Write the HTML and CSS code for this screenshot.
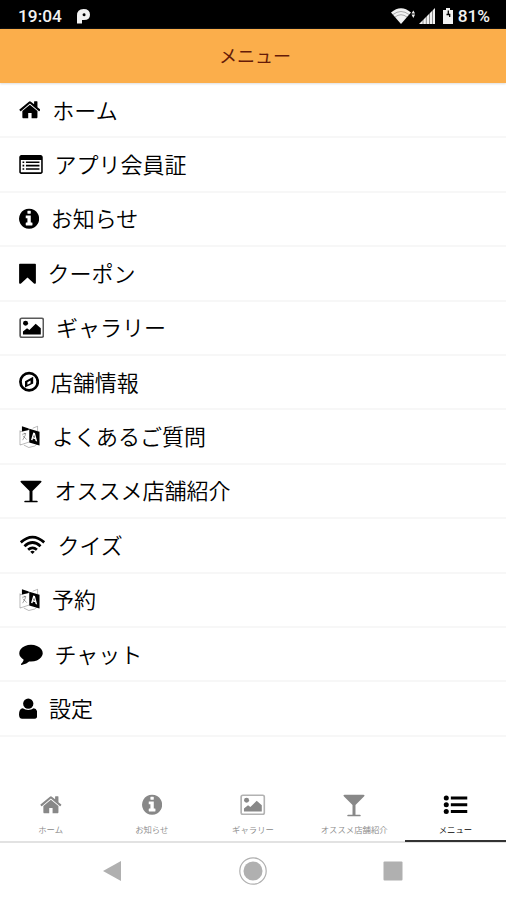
FILE: index.html
```html
<!DOCTYPE html>
<html lang="ja">
<head>
  <meta charset="UTF-8">
  <meta name="viewport" content="width=device-width, initial-scale=1.0">
  <title>メニュー</title>
  <link rel="stylesheet" href="styles.css">
</head>
<body>
  <!-- アイコン定義 -->
  <svg class="sprite" aria-hidden="true">
    <symbol id="home" viewBox="64 0 1664 1792">
      <path d="M1472 992v480q0 26-19 45t-45 19h-384v-384h-256v384h-384q-26 0-45-19t-19-45v-480q0-1 .5-3t.5-3l575-474 575 474q1 2 1 6zm223-69l-62 74q-8 9-21 11h-3q-13 0-21-7l-692-577-692 577q-12 8-24 7-13-2-21-11l-62-74q-8-10-7-23.500t11-21.500l719-599q32-26 76-26t76 26l244 204v-195q0-14 9-23t23-9h192q14 0 23 9t9 23v408l219 182q10 8 11 21.500t-7 23.500z"/>
    </symbol>
    <symbol id="card" viewBox="0 0 1792 1792">
      <path fill-rule="evenodd" d="M160 160h1472q66 0 113 47t47 113v1120q0 66-47 113t-113 47H160q-66 0-113-47T0 1440V320q0-66 47-113t113-47zM120 530v900q0 42 42 42h1468q42 0 42-42V530z"/>
      <path d="M250 640h130v120H250zM250 900h130v120H250zM250 1160h130v120H250zM510 640h1030v120H510zM510 900h1030v120H510zM510 1160h1030v120H510z"/>
    </symbol>
    <symbol id="info" viewBox="128 0 1536 1792">
      <path d="M1152 1376v-160q0-14-9-23t-23-9h-96v-512q0-14-9-23t-23-9h-320q-14 0-23 9t-9 23v160q0 14 9 23t23 9h96v320h-96q-14 0-23 9t-9 23v160q0 14 9 23t23 9h448q14 0 23-9t9-23zm-128-896v-160q0-14-9-23t-23-9h-192q-14 0-23 9t-9 23v160q0 14 9 23t23 9h192q14 0 23-9t9-23zm640 416q0 209-103 385.500t-279.500 279.500-385.500 103-385.500-103-279.500-279.500-103-385.500 103-385.500 279.500-279.500 385.500-103 385.500 103 279.500 279.500 103 385.500z"/>
    </symbol>
    <symbol id="bookmark" viewBox="0 0 1280 1792">
      <path d="M60 128h1160q60 0 60 60v1400q0 76-65 76-45 0-80-33l-495-450-495 450q-35 33-80 33-65 0-65-76V188q0-60 60-60z"/>
    </symbol>
    <symbol id="image" viewBox="0 0 1920 1792">
      <rect x="75" y="170" width="1770" height="1450" rx="130" fill="none" stroke="currentColor" stroke-width="130" opacity=".65"/>
      <circle cx="490" cy="560" r="190"/>
      <path d="M290 1420v-230l310-250 180 130 480-480 390 350v480z"/>
    </symbol>
    <symbol id="compass" viewBox="0 0 1536 1792">
      <circle cx="768" cy="896" r="660" fill="none" stroke="currentColor" stroke-width="210"/>
      <path fill-rule="evenodd" d="M1080 520v500l-624 310V850zM640 940v190l240-115V810z"/>
    </symbol>
    <symbol id="language" viewBox="0 0 22 24">
      <path fill="none" stroke="currentColor" stroke-width=".7" opacity=".4" d="M1 5.500v15l10-3.300M11 4.300L1 7M5 20.500l5 2.500 6-1.500 2.500-2M14 3.300l5-2v5"/>
      <path fill="none" stroke="currentColor" stroke-width=".8" opacity=".45" d="M3.300 9.500l4-1M5.500 8l1.200 2-3 5.500M4 11l4 4"/>
      <path d="M3 1.300l7 2.300v1.500L3 6.500z"/>
      <path fill-rule="evenodd" d="M10.500 3.800L21 7v14l-10.500-3zM14.600 7.700l-2.300 7.500 1.500.4.500-1.700 2.200.6.500 1.900 1.600.5-2.300-8.700zM15.400 10l.7 2.900-1.400-.4z"/>
    </symbol>
    <symbol id="glass" viewBox="0 0 1792 1792">
      <path d="M1699 186q0 35-43 78L1010 910v754h334q26 0 45 19t19 45-19 45-45 19H448q-26 0-45-19t-19-45 19-45 45-19h334V910L136 264q-43-43-43-78 0-58 90-58h1426q90 0 90 58z"/>
    </symbol>
    <symbol id="wifi" viewBox="0 0 2048 1792">
      <g fill="none" stroke="currentColor" stroke-width="210">
        <path d="M130 640q894-800 1788 0"/>
        <path d="M410 930q614-560 1228 0"/>
        <path d="M690 1200q334-290 668 0"/>
      </g>
      <path d="M1024 1270q90 0 170 75l-170 175-170-175q80-75 170-75z"/>
    </symbol>
    <symbol id="comment" viewBox="0 0 1792 1792">
      <path d="M1792 850q0 174-120 321.500t-326 233-450 85.500q-70 0-145-8-198 175-460 242-49 14-114 22-17 2-30.500-9T129 1708v-1q-3-4-.5-12t2-10 4.500-9.500l6-9 7-8.500 8-9q7-8 31-34.500t34.500-38 31-39.500 32.500-51 27-59 26-76q-157-89-247.500-220T0 850q0-174 120-321.500t326-233T896 210t450 85.500 326 233T1792 850z"/>
    </symbol>
    <symbol id="user" viewBox="0 0 1408 1792">
      <path d="M1408 1340q0 324-240 324H240q-240 0-240-324 0-450 290-480 170 135 414 135t414-135q290 30 290 480z"/>
      <circle cx="704" cy="510" r="390"/>
    </symbol>
    <symbol id="list" viewBox="0 0 1792 1792">
      <circle cx="192" cy="384" r="192"/>
      <circle cx="192" cy="896" r="192"/>
      <circle cx="192" cy="1408" r="192"/>
      <path d="M540 270h1252v228H540zM540 782h1252v228H540zM540 1294h1252v228H540z"/>
    </symbol>
  </svg>

  <div class="status-bar">
    <span>19:04</span>
    <svg class="app-mark" viewBox="0 0 13 15"><path fill-rule="evenodd" d="M0 14.500V6.500Q0 0 6.500 0 13 0 13 5.700 13 11 7 11H5v3.500zM7 4.200a1.500 1.500 0 1 0 .1 3 1.500 1.500 0 0 0-.1-3z"/></svg>
    <div class="status-right">
      <svg class="status-wifi" viewBox="0 0 25 16">
        <path d="M0 4.500Q10 -4 20 4.500L10 16z"/>
        <path d="M2 6.500q8-6 16 0M4 9q6-4.500 12 0" fill="none" stroke="#000" stroke-width=".6" opacity=".5"/>
        <path d="M20.500 5.500l1.800-3 1.800 3zM20.500 6.500h3.600l-1.800 3.500z"/>
      </svg>
      <svg class="status-signal" viewBox="0 0 16 16"><path d="M0 16L16 0v16z"/><path d="M4 10v6M7.300 7v9M10.500 4v12M13.500 2v14" stroke="#000" stroke-width=".6" opacity=".7"/></svg>
      <svg class="status-battery" viewBox="0 0 10 16"><path d="M0 2h3V0h4v2h3v14H0z"/><path d="M5.300 2.500v4.200M3.500 6.500h3.200v2.500" fill="none" stroke="#000" stroke-width="1.300"/></svg>
      <span>81%</span>
    </div>
  </div>

  <header class="header"><h1>メニュー</h1></header>

  <ul class="menu">
    <li><svg class="icon w-home"><use href="#home"/></svg>ホーム</li>
    <li><svg class="icon w-card"><use href="#card"/></svg>アプリ会員証</li>
    <li><svg class="icon w-round"><use href="#info"/></svg>お知らせ</li>
    <li><svg class="icon w-bookmark"><use href="#bookmark"/></svg>クーポン</li>
    <li><svg class="icon w-image"><use href="#image"/></svg>ギャラリー</li>
    <li><svg class="icon w-round"><use href="#compass"/></svg>店舗情報</li>
    <li><svg class="icon w-language"><use href="#language"/></svg>よくあるご質問</li>
    <li><svg class="icon w-card"><use href="#glass"/></svg>オススメ店舗紹介</li>
    <li><svg class="icon w-wifi"><use href="#wifi"/></svg>クイズ</li>
    <li><svg class="icon w-language"><use href="#language"/></svg>予約</li>
    <li><svg class="icon w-card"><use href="#comment"/></svg>チャット</li>
    <li><svg class="icon w-user"><use href="#user"/></svg>設定</li>
  </ul>

  <nav class="tabs">
    <div class="tab"><svg class="icon w-home"><use href="#home"/></svg><span>ホーム</span></div>
    <div class="tab"><svg class="icon w-round"><use href="#info"/></svg><span>お知らせ</span></div>
    <div class="tab"><svg class="icon w-image"><use href="#image"/></svg><span>ギャラリー</span></div>
    <div class="tab"><svg class="icon w-card"><use href="#glass"/></svg><span>オススメ店舗紹介</span></div>
    <div class="tab active"><svg class="icon w-list"><use href="#list"/></svg><span>メニュー</span></div>
  </nav>

  <div class="system-nav">
    <svg viewBox="0 0 28 28"><path d="M4 14L22 4v20z"/></svg>
    <svg viewBox="0 0 28 28"><circle cx="14" cy="14" r="13.200" fill="none" stroke="currentColor" stroke-width="1.200"/><circle cx="14" cy="14" r="9.500"/></svg>
    <svg viewBox="0 0 28 28"><rect x="4.500" y="4.500" width="19" height="19" rx="1"/></svg>
  </div>
</body>
</html>
```
FILE: styles.css
```css
* {
  box-sizing: border-box;
}

body {
  margin: 0;
  height: 900px;
  display: flex;
  flex-direction: column;
  overflow: hidden;
  background-color: #fff;
  color: #000;
  font-family: "Noto Sans CJK JP", sans-serif;
}

svg {
  fill: currentColor;
}

.sprite {
  display: none;
}

.status-bar {
  height: 29px;
  padding: 3px 16px 0 18px;
  display: flex;
  align-items: center;
  background-color: #000;
  color: #f2f2f2;
  font-family: Roboto, sans-serif;
  font-size: 17.3px;
  font-weight: 500;
}

.app-mark {
  width: 13px;
  height: 15px;
  margin-left: 15px;
}

.status-right {
  margin-left: auto;
  display: flex;
  align-items: center;
}

.status-wifi {
  width: 25px;
  height: 16px;
  margin-right: 3px;
}

.status-signal {
  width: 16px;
  height: 16px;
  margin-right: 8px;
}

.status-battery {
  width: 10px;
  height: 16px;
  margin-right: 5px;
}

.header {
  height: 54px;
  padding: 0 0 2px 4px;
  display: flex;
  align-items: center;
  justify-content: center;
  background-color: #fbae4b;
  box-shadow: 0 1px 2px #ddd;
}

.header h1 {
  margin: 0;
  color: #651b08;
  font-size: 18px;
  font-weight: 400;
}

.menu {
  margin: 0;
  padding: 1px 0 0;
  list-style: none;
}

.menu li {
  height: 54.4px;
  padding: 0 0 3px 18.5px;
  display: flex;
  align-items: center;
  border-bottom: 2px solid #f7f7f7;
  font-size: 22px;
  font-weight: 350;
}

.menu .icon {
  margin: 3px 12px 0 0;
}

.icon {
  height: 23.5px;
  flex: none;
}

.w-home { width: 21.8px; }
.w-card { width: 24px; }
.w-round { width: 20.2px; }
.w-bookmark { width: 17px; }
.w-image { width: 25.5px; }
.w-language { width: 21.5px; }
.w-wifi { width: 27px; }
.w-user { width: 18.5px; }
.w-list { width: 25px; }

.tabs {
  height: 57px;
  margin-top: auto;
  display: flex;
  border-bottom: 2px solid #e2e2e2;
}

.tab {
  flex: 1;
  height: 56px;
  padding-top: 7px;
  display: flex;
  flex-direction: column;
  align-items: center;
  color: #888;
  font-size: 8.4px;
  font-weight: 350;
  line-height: 12px;
  border-bottom: 2px solid transparent;
}

.tab span {
  margin-top: 6px;
}

.active {
  color: #000;
  border-bottom-color: #333;
}

.system-nav {
  height: 57px;
  padding: 0 99px 2px;
  display: flex;
  align-items: center;
  justify-content: space-between;
  color: #b0b0b0;
}

.system-nav svg {
  width: 28px;
  height: 28px;
}
```
